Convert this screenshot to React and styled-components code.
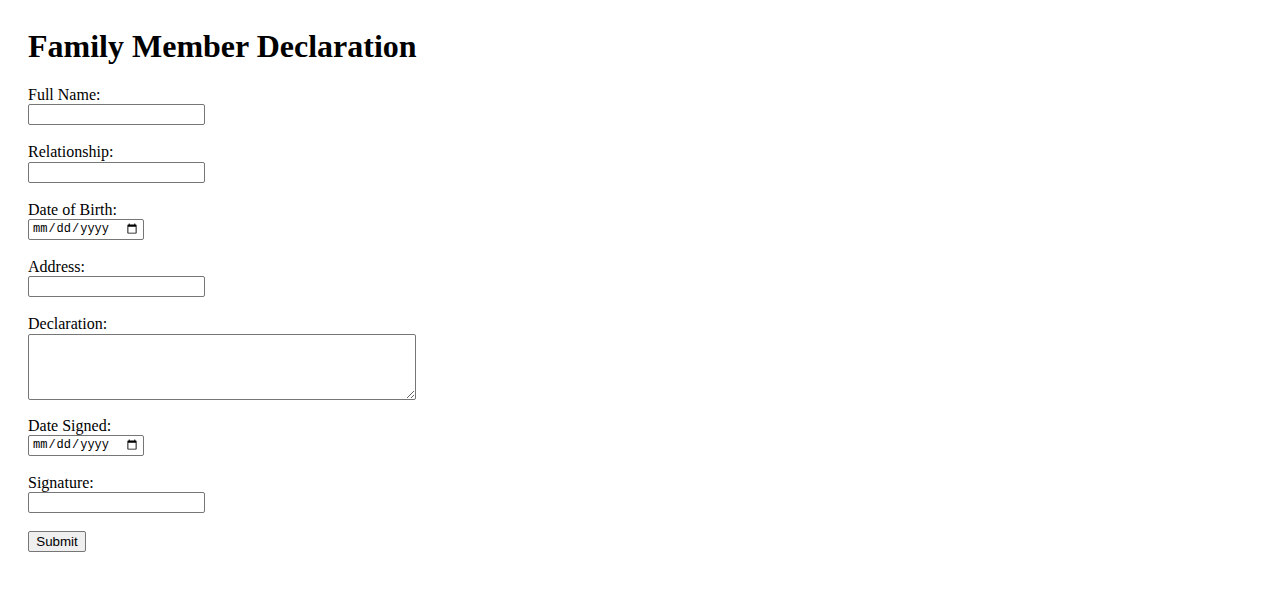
import React from 'react';
import styled, { createGlobalStyle } from 'styled-components';

const GlobalStyle = createGlobalStyle`
    body {
        margin: 8px;
        background: #ffffff;
        color: #000000;
        font-family: "Liberation Serif", "Times New Roman", serif;
        font-size: 16px;
    }
`;

const Page = styled.div`
    padding: 20px;
`;

const Title = styled.h1`
    font-family: "Liberation Serif", "Times New Roman", serif;
    font-size: 32px;
    font-weight: bold;
    margin: 0 0 21px;
    line-height: 37px;
`;

const Form = styled.form`
    display: flex;
    flex-direction: column;
    align-items: flex-start;
`;

const Field = styled.div`
    display: flex;
    flex-direction: column;
    align-items: flex-start;
    margin-bottom: ${props => props.$tall ? '17px' : '18px'};
`;

const Label = styled.label`
    display: block;
    line-height: 18.33px;
    font-size: 16px;
`;

const TextInput = styled.input`
    box-sizing: border-box;
    width: ${props => props.type === 'date' ? '116px' : '177px'};
    height: 21px;
    margin: 0;
    padding: ${props => props.type === 'date' ? '0 3px' : '1px 2px'};
    border: 1px solid #767676;
    border-radius: 2px;
    background: #ffffff;
    font-family: ${props => props.type === 'date'
        ? '"Liberation Mono", "Courier New", monospace'
        : '"Liberation Sans", Arial, sans-serif'};
    font-size: ${props => props.type === 'date' ? '12px' : '13px'};
    color: #000000;
`;

const TextArea = styled.textarea`
    box-sizing: border-box;
    width: 388px;
    height: 66px;
    margin: 0;
    padding: 2px;
    border: 1px solid #767676;
    border-radius: 2px;
    font-family: "Liberation Mono", monospace;
    font-size: 13px;
`;

const SubmitButton = styled.button`
    box-sizing: border-box;
    width: 58px;
    height: 21px;
    padding: 0 6px;
    border: 1px solid #767676;
    border-radius: 2px;
    background: #efefef;
    color: #000000;
    font-family: "Liberation Sans", Arial, sans-serif;
    font-size: 13.33px;
    line-height: 17px;
    cursor: pointer;
`;

const fields = [
    { id: 'fullName', label: 'Full Name:', type: 'text' },
    { id: 'relationship', label: 'Relationship:', type: 'text' },
    { id: 'dob', label: 'Date of Birth:', type: 'date' },
    { id: 'address', label: 'Address:', type: 'text' },
    { id: 'declaration', label: 'Declaration:', type: 'textarea' },
    { id: 'dateSigned', label: 'Date Signed:', type: 'date' },
    { id: 'signature', label: 'Signature:', type: 'text' },
];

const App = () => {
    const handleSubmit = e => {
        e.preventDefault();
    };

    return (
        <Page>
            <GlobalStyle />
            <Title>Family Member Declaration</Title>
            <Form onSubmit={handleSubmit}>
                {fields.map(field => (
                    <Field key={field.id} $tall={field.type === 'textarea'}>
                        <Label htmlFor={field.id}>{field.label}</Label>
                        {field.type === 'textarea'
                            ? <TextArea id={field.id} />
                            : <TextInput id={field.id} type={field.type} />}
                    </Field>
                ))}
                <SubmitButton type="submit">Submit</SubmitButton>
            </Form>
        </Page>
    );
};

export default App;
